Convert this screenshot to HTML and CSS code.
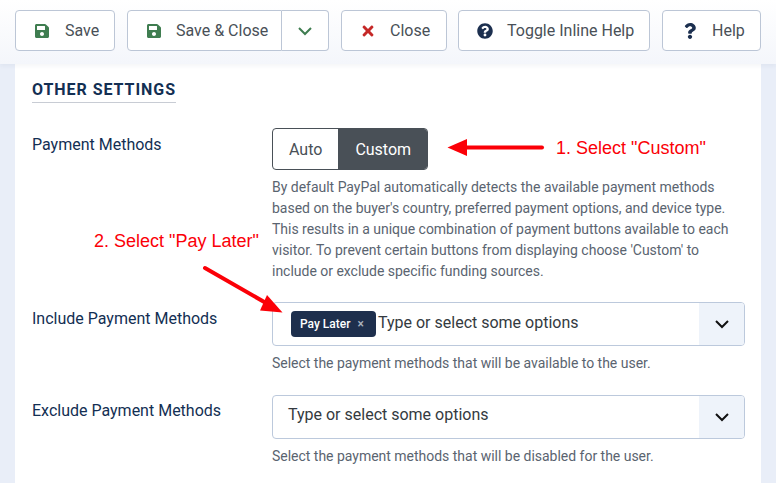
FILE: index.html
```html
<!DOCTYPE html>
<html lang="en">
<head>
    <meta charset="UTF-8">
    <title>Other Settings</title>
    <link rel="stylesheet" href="styles.css">
</head>
<body>
    <div id="app">
        <header class="toolbar">
            <button class="btn btn-save">
                <svg class="icon icon-save" viewBox="0 0 448 512"><path d="M433.941 129.941l-83.882-83.882A48 48 0 0 0 316.118 32H48C21.49 32 0 53.49 0 80v352c0 26.51 21.49 48 48 48h352c26.51 0 48-21.49 48-48V163.882a48 48 0 0 0-14.059-33.941zM224 416c-35.346 0-64-28.654-64-64 0-35.346 28.654-64 64-64s64 28.654 64 64c0 35.346-28.654 64-64 64zm96-304.52V212c0 6.627-5.373 12-12 12H76c-6.627 0-12-5.373-12-12V108c0-6.627 5.373-12 12-12h228.52c3.183 0 6.235 1.264 8.485 3.515l3.48 3.48A11.996 11.996 0 0 1 320 111.48z"/></svg>
                Save
            </button>
            <div class="btn-group">
                <button class="btn btn-main">
                    <svg class="icon icon-save" viewBox="0 0 448 512"><path d="M433.941 129.941l-83.882-83.882A48 48 0 0 0 316.118 32H48C21.49 32 0 53.49 0 80v352c0 26.51 21.49 48 48 48h352c26.51 0 48-21.49 48-48V163.882a48 48 0 0 0-14.059-33.941zM224 416c-35.346 0-64-28.654-64-64 0-35.346 28.654-64 64-64s64 28.654 64 64c0 35.346-28.654 64-64 64zm96-304.52V212c0 6.627-5.373 12-12 12H76c-6.627 0-12-5.373-12-12V108c0-6.627 5.373-12 12-12h228.52c3.183 0 6.235 1.264 8.485 3.515l3.48 3.48A11.996 11.996 0 0 1 320 111.48z"/></svg>
                    Save &amp; Close
                </button>
                <button class="btn btn-toggle">
                    <svg class="chevron chevron-green" viewBox="0 0 16 10"><path d="M2 2l6 6 6-6"/></svg>
                </button>
            </div>
            <button class="btn btn-close">
                <svg class="icon icon-close" viewBox="0 0 352 512"><path d="M242.72 256l100.07-100.07c12.28-12.28 12.28-32.19 0-44.48l-22.24-22.24c-12.28-12.28-32.19-12.28-44.48 0L176 189.28 75.93 89.21c-12.28-12.28-32.19-12.28-44.48 0L9.21 111.45c-12.28 12.28-12.28 32.19 0 44.48L109.28 256 9.21 356.07c-12.28 12.28-12.28 32.19 0 44.48l22.24 22.24c12.28 12.28 32.2 12.28 44.48 0L176 322.72l100.07 100.07c12.28 12.28 32.2 12.28 44.48 0l22.24-22.24c12.28-12.28 12.28-32.19 0-44.48L242.72 256z"/></svg>
                Close
            </button>
            <button class="btn btn-inline">
                <svg class="icon icon-dark" viewBox="0 0 512 512"><path d="M504 256c0 136.997-111.043 248-248 248S8 392.997 8 256C8 119.083 119.043 8 256 8s248 111.083 248 248zM262.655 90c-54.497 0-89.255 22.957-116.549 63.758-3.536 5.286-2.353 12.415 2.715 16.258l34.699 26.31c5.205 3.947 12.621 3.008 16.665-2.122 17.864-22.658 30.113-35.797 57.303-35.797 20.429 0 45.698 13.148 45.698 32.958 0 14.976-12.363 22.667-32.534 33.976C247.128 238.528 216 254.941 216 296v4c0 6.627 5.373 12 12 12h56c6.627 0 12-5.373 12-12v-1.333c0-28.462 83.186-29.647 83.186-106.667 0-58.002-60.165-102-116.531-102zM256 338c-25.365 0-46 20.635-46 46 0 25.364 20.635 46 46 46s46-20.636 46-46c0-25.365-20.635-46-46-46z"/></svg>
                Toggle Inline Help
            </button>
            <button class="btn btn-help">
                <svg class="icon icon-dark" viewBox="0 0 384 512"><path d="M202.021 0C122.202 0 70.503 32.703 29.914 91.026c-7.363 10.58-5.093 25.086 5.178 32.874l43.138 32.709c10.373 7.865 25.132 6.026 33.253-4.148 25.049-31.381 43.63-49.449 82.757-49.449 30.764 0 68.816 19.799 68.816 49.631 0 22.552-18.617 34.134-48.993 51.164-35.423 19.86-82.299 44.576-82.299 106.405V320c0 13.255 10.745 24 24 24h72.471c13.255 0 24-10.745 24-24v-5.773c0-42.86 125.268-44.645 125.268-160.627C377.504 66.256 286.902 0 202.021 0zM192 373.459c-38.196 0-69.271 31.075-69.271 69.271 0 38.195 31.075 69.27 69.271 69.27s69.271-31.075 69.271-69.271-31.075-69.27-69.271-69.27z"/></svg>
                Help
            </button>
        </header>

        <main class="card">
            <h2 class="section-title">Other Settings</h2>

            <div class="field field-methods">
                <label class="field-label">Payment Methods</label>
                <div class="field-control">
                    <div class="switch">
                        <span class="switch-option">Auto</span>
                        <span class="switch-option active">Custom</span>
                    </div>
                    <p class="help">By default PayPal automatically detects the available payment methods based on the buyer's country, preferred payment options, and device type. This results in a unique combination of payment buttons available to each visitor. To prevent certain buttons from displaying choose 'Custom' to include or exclude specific funding sources.</p>
                </div>
            </div>

            <div class="field field-include">
                <label class="field-label">Include Payment Methods</label>
                <div class="field-control">
                    <div class="select">
                        <div class="select-value">
                            <span class="tag">Pay Later <span class="tag-x">×</span></span>
                            <span>Type or select some options</span>
                        </div>
                        <div class="select-arrow">
                            <svg class="chevron" viewBox="0 0 16 10"><path d="M2 2l6 6 6-6"/></svg>
                        </div>
                    </div>
                    <p class="help">Select the payment methods that will be available to the user.</p>
                </div>
            </div>

            <div class="field field-exclude">
                <label class="field-label">Exclude Payment Methods</label>
                <div class="field-control">
                    <div class="select">
                        <div class="select-value select-empty">
                            <span>Type or select some options</span>
                        </div>
                        <div class="select-arrow">
                            <svg class="chevron" viewBox="0 0 16 10"><path d="M2 2l6 6 6-6"/></svg>
                        </div>
                    </div>
                    <p class="help">Select the payment methods that will be disabled for the user.</p>
                </div>
            </div>
        </main>

        <!-- annotations drawn over the screenshot -->
        <svg class="arrows" viewBox="0 0 776 483">
            <path d="M466 147.5H542" stroke="#fb0007" stroke-width="4" stroke-linecap="round"/>
            <path d="M447.5 147.5L467 139V156Z" fill="#fb0007"/>
            <path d="M205 268L266 303" stroke="#fb0007" stroke-width="4" stroke-linecap="round"/>
            <path d="M282.5 312.5L260 310.5L267 295Z" fill="#fb0007"/>
        </svg>
        <span class="note note-custom">1. Select "Custom"</span>
        <span class="note note-later">2. Select "Pay Later"</span>
    </div>
</body>
</html>
```

FILE: styles.css
```css
* {
    box-sizing: border-box;
}

body {
    font-family: 'Roboto', sans-serif;
    margin: 0;
    padding: 0;
    background-color: #e9eef8;
    color: #132f53;
    overflow: hidden;
}

#app {
    position: relative;
    display: flex;
    flex-direction: column;
    width: 776px;
    height: 483px;
    overflow: hidden;
}

.toolbar {
    display: flex;
    height: 64px;
    padding: 10px 0 0 15px;
    background: linear-gradient(180deg, #ffffff 0%, #f4f6fb 100%);
    box-shadow: 0 2px 4px rgba(30, 50, 90, 0.05);
    position: relative;
}

.btn {
    display: flex;
    align-items: center;
    flex: none;
    height: 41px;
    background: #fff;
    border: 1px solid #bcc6d6;
    border-radius: 4px;
    font-family: inherit;
    font-size: 16px;
    color: #495057;
    white-space: nowrap;
}

.btn-save {
    width: 100px;
    gap: 15px;
    padding: 0 0 0 18px;
    margin-right: 12px;
}

.btn-main {
    width: 155px;
    gap: 14px;
    padding: 0 0 0 18px;
    border-radius: 4px 0 0 4px;
}

.btn-close {
    width: 106px;
    gap: 14px;
    padding: 0 0 0 18px;
    margin-right: 11px;
}

.btn-inline {
    width: 192px;
    gap: 14px;
    padding: 0 0 0 18px;
    margin-right: 12px;
}

.btn-help {
    width: 99px;
    gap: 14px;
    padding: 0 0 0 19px;
}

.icon {
    width: 16px;
    height: 16px;
    flex: none;
}

.icon-save {
    fill: #3f7d50;
}

.icon-close {
    fill: #c52827;
}

.icon-dark {
    fill: #1c2f4f;
}

.btn-group {
    display: flex;
    flex: none;
    margin-right: 12px;
}

.btn-toggle {
    justify-content: center;
    width: 47px;
    padding: 0;
    border-left: 0;
    border-radius: 0 4px 4px 0;
}

.chevron {
    width: 16px;
    height: 10px;
    fill: none;
    stroke: #111;
    stroke-width: 2;
}

.chevron-green {
    stroke: #3f7d50;
}

.card {
    flex: 1;
    margin: 0 15px;
    padding: 16px 16px 0 17px;
    background: #fff;
}

.section-title {
    display: inline-block;
    margin: 0;
    padding-bottom: 3px;
    border-bottom: 1px solid #c8ccd4;
    font-size: 16px;
    font-weight: 700;
    letter-spacing: 0.95px;
    line-height: 19px;
    text-transform: uppercase;
    color: #132f53;
}

.field {
    display: grid;
    grid-template-columns: 240px 473px;
}

.field-methods {
    margin-top: 25px;
}

.field-include {
    margin-top: 20px;
}

.field-exclude {
    margin-top: 21px;
}

.field-label {
    font-size: 16px;
    line-height: 24px;
    padding-top: 5px;
}

.field-exclude .field-label {
    padding-top: 4px;
}

.switch {
    display: inline-flex;
    height: 42px;
    border: 1px solid #495057;
    border-radius: 4px;
    overflow: hidden;
    font-size: 16px;
}

.switch-option {
    display: flex;
    align-items: center;
    padding: 0 16px;
    color: #495057;
}

.switch-option.active {
    padding: 0 16px 0 17px;
    background: #495057;
    color: #fff;
}

.help {
    margin: 7px 0 0;
    font-size: 14px;
    line-height: 21px;
    letter-spacing: -0.015px;
    color: #5a6470;
}

.select {
    display: flex;
    height: 44px;
    border: 1px solid #bcc9dc;
    border-radius: 4px;
    overflow: hidden;
    font-size: 16px;
    color: #343a40;
}

.select-value {
    flex: 1;
    display: flex;
    align-items: center;
    gap: 2px;
    padding: 0 0 3px 18px;
}

.select-empty {
    padding: 0 0 5px 15px;
}

.select-arrow {
    display: flex;
    align-items: center;
    justify-content: center;
    width: 45px;
    background: #eef3fa;
}

.tag {
    display: inline-block;
    margin-top: 3px;
    padding: 0 9px;
    width: 85px;
    height: 26px;
    line-height: 26px;
    background: #1e2f4d;
    border-radius: 4px;
    color: #fff;
    font-size: 12px;
    font-weight: 500;
    white-space: nowrap;
}

.tag-x {
    margin-left: 4px;
    color: #a9b1bd;
}

.arrows {
    position: absolute;
    left: 0;
    top: 0;
    width: 776px;
    height: 483px;
    pointer-events: none;
}

.note {
    position: absolute;
    font-family: 'Liberation Sans', sans-serif;
    font-size: 18px;
    line-height: 20px;
    color: #fb0007;
    white-space: nowrap;
}

.note-custom {
    left: 556px;
    top: 138px;
}

.note-later {
    left: 94px;
    top: 231px;
}
```
